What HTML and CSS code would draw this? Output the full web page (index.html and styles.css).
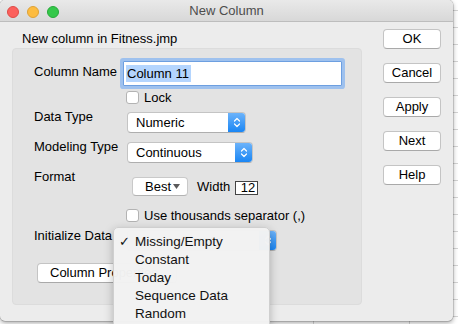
FILE: index.html
```html
<!DOCTYPE html>
<html>
<head>
<meta charset="utf-8">
<link rel="stylesheet" href="styles.css">
</head>
<body>
<div class="stage">
  <div class="sheet">
    <div class="sheet-row"><span class="cell c1">51</span><span class="cell c2">176</span></div>
  </div>

  <div class="window">
    <div class="titlebar">
      <div class="lights">
        <span class="light red"></span>
        <span class="light yellow"></span>
        <span class="light green"></span>
      </div>
      <div class="title">New Column</div>
    </div>
    <div class="content">
      <div class="left">
        <div class="subtitle">New column in Fitness.jmp</div>
        <div class="panel">
          <div class="row r-name">
            <div class="label lbl-name">Column Name</div>
            <div class="textfield"><span class="sel">Column 11</span></div>
          </div>
          <div class="row r-lock">
            <span class="check"></span><span class="check-text">Lock</span>
          </div>
          <div class="row r-dtype">
            <div class="label">Data Type</div>
            <div class="popup w-numeric"><span class="popup-text">Numeric</span><span class="stepper"><svg width="8" height="13" viewBox="0 0 8 13"><path d="M1.5 5 L4 2.5 L6.5 5 M1.5 8 L4 10.5 L6.5 8" fill="none" stroke="#fff" stroke-width="1.2" stroke-linecap="round" stroke-linejoin="round"/></svg></span></div>
          </div>
          <div class="row r-mtype">
            <div class="label">Modeling Type</div>
            <div class="popup w-cont"><span class="popup-text">Continuous</span><span class="stepper"><svg width="8" height="13" viewBox="0 0 8 13"><path d="M1.5 5 L4 2.5 L6.5 5 M1.5 8 L4 10.5 L6.5 8" fill="none" stroke="#fff" stroke-width="1.2" stroke-linecap="round" stroke-linejoin="round"/></svg></span></div>
          </div>
          <div class="row r-format">
            <div class="label">Format</div>
            <div class="best">Best<svg width="7" height="5" viewBox="0 0 7 5"><path d="M0 0 L7 0 L3.5 5 Z" fill="#5a5a5a"/></svg></div>
            <div class="width-label">Width</div>
            <div class="width-box">12</div>
          </div>
          <div class="row r-sep">
            <span class="check"></span><span class="check-text">Use thousands separator (,)</span>
          </div>
          <div class="row r-init">
            <div class="label">Initialize Data</div>
            <div class="popup w-init"><span class="popup-text">Missing/Empty</span><span class="stepper"><svg width="8" height="13" viewBox="0 0 8 13"><path d="M1.5 5 L4 2.5 L6.5 5 M1.5 8 L4 10.5 L6.5 8" fill="none" stroke="#fff" stroke-width="1.2" stroke-linecap="round" stroke-linejoin="round"/></svg></span></div>
          </div>
          <div class="row r-props">
            <div class="btn props">Column Properties</div>
          </div>
        </div>
      </div>
      <div class="buttons">
        <div class="btn side">OK</div>
        <div class="btn side">Cancel</div>
        <div class="btn side">Apply</div>
        <div class="btn side">Next</div>
        <div class="btn side">Help</div>
      </div>
    </div>
  </div>

  <div class="menu">
    <div class="item"><span class="tick">✓</span>Missing/Empty</div>
    <div class="item"><span class="tick"></span>Constant</div>
    <div class="item"><span class="tick"></span>Today</div>
    <div class="item"><span class="tick"></span>Sequence Data</div>
    <div class="item"><span class="tick"></span>Random</div>
  </div>
</div>
</body>
</html>
```

FILE: styles.css
```css
html, body {
  margin: 0;
  padding: 0;
}
body {
  font-family: "Liberation Sans", Arial, sans-serif;
  font-size: 13px;
  color: #000;
  background: #fff;
}
.stage {
  position: relative;
  width: 458px;
  height: 324px;
  overflow: hidden;
}
.sheet {
  width: 458px;
  height: 324px;
  background-color: #fff;
  background-image:
    repeating-linear-gradient(to bottom, transparent 0, transparent 16px, #d4d4d4 16px, #d4d4d4 17px),
    linear-gradient(to right, transparent 313px, #d4d4d4 313px, #d4d4d4 314px, transparent 314px),
    linear-gradient(to right, transparent 409px, #d4d4d4 409px, #d4d4d4 410px, transparent 410px);
  background-position: 0 -6px, 0 0, 0 0;
  padding-top: 320px;
  box-sizing: border-box;
  overflow: hidden;
}
.sheet-row {
  display: flex;
  height: 17px;
  line-height: 17px;
  font-size: 13px;
  color: #333;
}
.cell.c1 { margin-left: 34px; width: 60px; }
.cell.c2 { margin-left: 0; }

.window {
  position: absolute;
  left: 0;
  top: 0;
  width: 453px;
  height: 321px;
  background: #ececec;
  border-radius: 5px;
  box-shadow: 0 0 0 0.5px rgba(0,0,0,0.25), 0 2px 5px rgba(0,0,0,0.35);
  overflow: hidden;
}
.titlebar {
  position: relative;
  height: 22px;
  box-sizing: border-box;
  background: linear-gradient(to bottom, #e9e9e9, #d8d8d8);
  border-bottom: 1px solid #bdbdbd;
  display: flex;
  align-items: center;
  justify-content: center;
}
.lights {
  position: absolute;
  left: 7px;
  top: 6px;
  display: flex;
  gap: 8px;
}
.light {
  width: 12px;
  height: 12px;
  border-radius: 50%;
  box-sizing: border-box;
}
.red { background: #fc605c; border: 1px solid #de4b46; }
.yellow { background: #fdbc40; border: 1px solid #dea236; }
.green { background: #34c84a; border: 1px solid #27a939; }
.title {
  color: #4d4d4d;
  font-size: 13px;
  line-height: 16px;
}
.content {
  display: flex;
}
.left {
  padding-left: 12px;
  width: 350px;
}
.subtitle {
  margin-top: 9px;
  margin-left: 10px;
  line-height: 16px;
  height: 17px;
}
.panel {
  background: #e3e3e3;
  border: 1px solid #dcdcdc;
  border-radius: 4px;
  box-sizing: border-box;
  width: 350px;
  height: 257px;
  padding: 12px 0 0 21px;
}
.row {
  display: flex;
  align-items: flex-start;
}
.label {
  width: 92px;
  line-height: 16px;
  flex: none;
}
.r-name { height: 25px; }
.r-name .label { margin-top: 3px; }
.textfield {
  margin-left: -3px;
  width: 219px;
  height: 25px;
  box-sizing: border-box;
  background: #fff;
  border: 1px solid #6d9fe0;
  box-shadow: 0 0 0 3px #9ec1ee;
  border-radius: 1px;
  padding: 3px 0 0 2px;
  line-height: 18px;
}
.sel {
  background: #b4d5fe;
  padding: 1px 2px 1px 1px;
}
.r-lock {
  margin-top: 5px;
  height: 13px;
  align-items: center;
}
.check {
  margin-left: 92px;
  width: 13px;
  height: 13px;
  box-sizing: border-box;
  background: #fff;
  border: 1px solid #b3b3b3;
  border-radius: 3px;
  flex: none;
}
.check-text {
  margin-left: 5px;
  line-height: 16px;
}
.r-dtype { margin-top: 5px; height: 24px; }
.r-mtype { margin-top: 6px; height: 24px; }
.popup {
  margin-top: 3px;
  margin-left: 1px;
  height: 21px;
  box-sizing: border-box;
  background: #fff;
  border: 1px solid #c4c4c4;
  border-bottom-color: #aeaeae;
  border-radius: 4px;
  display: flex;
  overflow: hidden;
}
.w-numeric { width: 119px; }
.w-cont { width: 126px; }
.w-init { width: 150px; }
.popup-text {
  flex: 1;
  padding-left: 8px;
  line-height: 19px;
}
.stepper {
  width: 17px;
  background: linear-gradient(to bottom, #6cb3fa, #1a86f4);
  display: flex;
  align-items: center;
  justify-content: center;
}
.r-format { margin-top: 6px; height: 27px; }
.best {
  margin-top: 8px;
  margin-left: 6px;
  width: 56px;
  height: 19px;
  box-sizing: border-box;
  background: #fff;
  border: 1px solid #c9c9c9;
  border-bottom-color: #b3b3b3;
  border-radius: 4px;
  display: flex;
  align-items: center;
  justify-content: flex-end;
  padding-right: 7px;
  gap: 2px;
  line-height: 17px;
}
.width-label {
  margin-top: 10px;
  margin-left: 9px;
  line-height: 16px;
}
.width-box {
  margin-top: 12px;
  margin-left: 5px;
  width: 23px;
  height: 14px;
  box-sizing: border-box;
  background: #fff;
  border: 1px solid #444;
  line-height: 12px;
  text-align: right;
  padding-right: 2px;
}
.r-sep {
  margin-top: 13px;
  height: 13px;
  align-items: center;
}
.r-init { margin-top: 5px; height: 24px; }
.r-init .label { margin-top: 1px; }
.r-props { margin-top: 12px; }
.btn {
  background: #fff;
  border: 1px solid #c4c4c4;
  border-bottom-color: #a9a9a9;
  border-radius: 4px;
  box-sizing: border-box;
  height: 20px;
  line-height: 18px;
  text-align: center;
}
.props {
  margin-left: 3px;
  width: 140px;
  text-align: left;
  padding-left: 12px;
}
.buttons {
  margin-left: 21px;
  padding-top: 7px;
  display: flex;
  flex-direction: column;
  gap: 14px;
}
.side { width: 58px; }

.menu {
  position: absolute;
  left: 113px;
  top: 227px;
  width: 157px;
  height: 102px;
  box-sizing: border-box;
  padding-top: 5px;
  background: rgba(242, 242, 242, 0.98);
  border: 1px solid #cfcfcf;
  border-radius: 5px;
  box-shadow: 0 3px 10px rgba(0,0,0,0.25);
}
.item {
  height: 18px;
  line-height: 18px;
  display: flex;
  font-size: 13.5px;
  color: #111;
}
.tick {
  width: 21px;
  padding-left: 5px;
  box-sizing: border-box;
  font-size: 13px;
}
```
